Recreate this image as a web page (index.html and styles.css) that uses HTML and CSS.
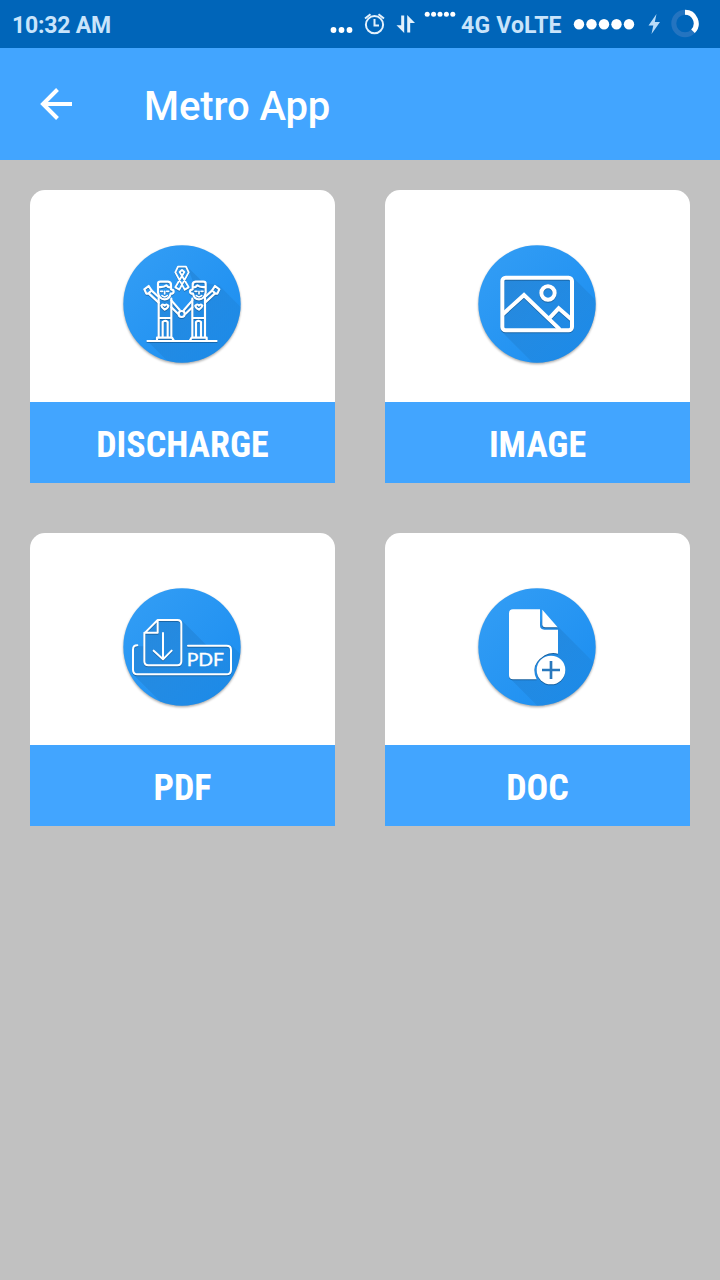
FILE: index.html
```html
<!DOCTYPE html>
<html lang="en">
<head>
  <meta charset="UTF-8" />
  <meta name="viewport" content="width=device-width, initial-scale=1" />
  <title>Metro App</title>
  <link rel="stylesheet" href="styles.css">
</head>
<body>
  <div class="status-bar">
    <span class="time">10:32 AM</span>
    <svg class="more" width="24" height="48" viewBox="0 0 24 48" fill="#fff">
      <circle cx="3.500" cy="30" r="2.900"/><circle cx="11.500" cy="30" r="2.900"/><circle cx="19.500" cy="30" r="2.900"/>
    </svg>
    <svg class="alarm" width="24" height="48" viewBox="0 0 24 48" fill="none" stroke="#e3f1fc" stroke-width="2">
      <circle cx="11.500" cy="24.700" r="8.600"/>
      <path d="M11.500 19v6.500H16M2 18.500l5.500-4.300M21 18.500l-5.500-4.300"/>
    </svg>
    <svg class="data" width="22" height="48" viewBox="0 0 22 48" fill="#e3f1fc">
      <path d="M6.200 15.500h3V33L1.500 25.200h4.700zM12.200 15l7.800 8h-4.800v9.500h-3z"/>
    </svg>
    <svg class="signal-small" width="32" height="48" viewBox="0 0 32 48" fill="#fff">
      <circle cx="3.200" cy="14.300" r="2.500"/><circle cx="9.600" cy="14.300" r="2.500"/><circle cx="16" cy="14.300" r="2.500"/><circle cx="22.400" cy="14.300" r="2.500"/><circle cx="28.800" cy="14.300" r="2.500"/>
    </svg>
    <span class="network">4G VoLTE</span>
    <svg class="signal" width="62" height="48" viewBox="0 0 62 48" fill="#fff">
      <circle cx="6" cy="24.300" r="5.200"/><circle cx="18.500" cy="24.300" r="5.200"/><circle cx="31" cy="24.300" r="5.200"/><circle cx="43.500" cy="24.300" r="5.200"/><circle cx="56" cy="24.300" r="5.200"/>
    </svg>
    <svg class="bolt" width="12" height="48" viewBox="0 0 12 48" fill="#b9dcf9">
      <path d="M8.500 14L.5 25.500h4.800L3.500 34l8.500-12H6.800z"/>
    </svg>
    <svg class="battery" width="28" height="48" viewBox="0 0 28 48" fill="none" stroke-width="5">
      <circle cx="14" cy="23.500" r="11.200" stroke="#2474c0"/>
      <path d="M14 12.300a11.200 11.200 0 0 1 8 19" stroke="#fff"/>
    </svg>
  </div>

  <header class="toolbar">
    <svg class="back" width="32" height="32" viewBox="0 0 32 32" fill="none" stroke="#fff" stroke-width="4">
      <path d="M32 16H3M17.500 1.500L3 16l14.500 14.500"/>
    </svg>
    <h1>Metro App</h1>
  </header>

  <svg class="defs" width="0" height="0">
    <defs>
      <linearGradient id="disc" x1="0" y1="0" x2="1" y2="1">
        <stop offset="0" stop-color="#349ef5"/>
        <stop offset="1" stop-color="#1a8df0"/>
      </linearGradient>
      <linearGradient id="shade" x1="0" y1="0" x2="1" y2="1">
        <stop offset="0" stop-color="#1d6fb9" stop-opacity=".42"/>
        <stop offset="1" stop-color="#1d7fd0" stop-opacity=".2"/>
      </linearGradient>
      <clipPath id="round"><circle cx="195" cy="192" r="176"/></clipPath>
      <g id="person">
        <!-- hair, face, ear -->
        <path d="M123 158V131q0-6 7-6h23q10 1 9 12v11q8 1 8 7t-9 6q-4 17-18 17-17 0-20-20zM123 141q18 2 25-5 4 6 14 7"/>
        <path d="M131 154h6M149 154h6M143 154v8M135 167q8 7 16 0" stroke-width="5"/>
        <!-- raised arm -->
        <path d="M125 188l-30-28-7 1-6-13 13-10 9 14 21 19M95 160l9-9"/>
        <!-- shirt and legs -->
        <path d="M125 174V292M163 176V292M125 234h38M137 292V246q7-7 15 0v46M120 301v-8h45l5 8"/>
        <path d="M133 197q4-7 10 0 5-7 11 0 0 6-11 12-9-6-10-12z"/>
        <path d="M163 181l25 29M163 202l20 19"/>
      </g>
    </defs>
  </svg>

  <main class="grid">
    <a class="card">
      <div class="picture">
        <svg class="icon" viewBox="0 0 390 390">
          <circle class="disc" cx="195" cy="192" r="176"/>
          <path clip-path="url(#round)" fill="url(#shade)" d="M211 80L260 128L306 136L390 220V390H178L92 304L122 290V184L160 180L194 220L228 180V125z"/>
          <g class="line" stroke-width="6.500">
            <use href="#person"/>
            <use href="#person" transform="matrix(-1 0 0 1 389 0)"/>
            <circle cx="194" cy="222" r="9"/>
            <path d="M91 303h208" stroke-width="5.500"/>
            <!-- ribbon -->
            <path d="M183 80h24l8 17-28 52-12-7 27-46-7-6-7 6 27 46-12 7-28-52z" stroke-width="5.500"/>
          </g>
        </svg>
      </div>
      <div class="label"><span>DISCHARGE</span></div>
    </a>

    <a class="card">
      <div class="picture">
        <svg class="icon" viewBox="0 0 390 390">
          <circle class="disc" cx="195" cy="192" r="176"/>
          <path clip-path="url(#round)" fill="url(#shade)" d="M302 111L390 199V390H204L88 274V111z"/>
          <g class="line" stroke-width="12">
            <rect x="91" y="113" width="209" height="158" rx="10"/>
            <circle cx="228" cy="159" r="20"/>
            <path d="M94 221l62-56 105 101M231 236l29-31 37 32" stroke-linejoin="miter"/>
          </g>
        </svg>
      </div>
      <div class="label"><span>IMAGE</span></div>
    </a>

    <a class="card">
      <div class="picture">
        <svg class="icon" viewBox="0 0 390 390">
          <circle class="disc" cx="195" cy="192" r="176"/>
          <path clip-path="url(#round)" fill="url(#shade)" d="M194 112l75 75h75L390 233V390H164L48 274V190h34V150l40-38z"/>
          <g class="line" stroke-width="6">
            <path d="M122 111h59q12 0 12 12v112q0 12-12 12H94q-12 0-12-12v-84zM122 111v38H82"/>
            <path d="M138 150v77M110 203l28 26 26-26"/>
            <path d="M61 187q-13 0-13 13v60q0 14 14 14h266q14 0 14-14v-59q0-13-13-13H213"/>
          </g>
          <text class="pdf" x="209" y="248" textLength="112" lengthAdjust="spacingAndGlyphs">PDF</text>
        </svg>
      </div>
      <div class="label"><span>PDF</span></div>
    </a>

    <a class="card">
      <div class="picture">
        <svg class="icon" viewBox="0 0 390 390">
          <circle class="disc" cx="195" cy="192" r="176"/>
          <path clip-path="url(#round)" fill="url(#shade)" d="M257 130L390 263V390H218L112 284l100-180z"/>
          <g class="solid">
            <path d="M123 79h81v48q0 13 13 13h41v72q-20-6-40 5-31 20-31 44 0 15 7 28h-71q-12 0-12-12V91q0-12 12-12z"/>
            <path d="M211 80l46 53h-37q-9 0-9-9z"/>
            <circle cx="237" cy="261" r="43"/>
          </g>
          <path d="M237 234v54M210 261h54" stroke="#2878bd" stroke-width="8"/>
        </svg>
      </div>
      <div class="label"><span>DOC</span></div>
    </a>
  </main>
</body>
</html>
```

FILE: styles.css
```css
* { margin: 0; padding: 0; box-sizing: border-box; }
body {
  font-family: Roboto, sans-serif;
  background: #c1c1c1;
  min-height: 100vh;
}
/* Status bar */
.status-bar {
  display: flex;
  align-items: center;
  height: 48px;
  padding-left: 12px;
  background: #0065b9;
  color: #c9e4fb;
  font-size: 23px;
  font-weight: 700;
  white-space: nowrap;
}
.status-bar svg { flex: none; }
.time {
  width: 318px;
  padding-top: 2px;
  letter-spacing: -0.2px;
}
.alarm { margin-left: 9px; }
.data { margin-left: 8px; }
.signal-small { margin-left: 7px; }
.network {
  width: 112px;
  margin-left: 5px;
  padding-top: 2px;
  letter-spacing: 0.2px;
}
.bolt { margin-left: 13px; }
.battery { margin-left: 11px; }
/* Toolbar */
.toolbar {
  display: flex;
  align-items: center;
  height: 112px;
  padding-left: 40px;
  background: #42a5ff;
}
h1 {
  margin-left: 72px;
  padding-top: 4px;
  font-size: 40px;
  font-weight: 500;
  letter-spacing: -0.1px;
  color: #fff;
}
.defs { display: block; }
/* Cards */
.grid {
  display: grid;
  grid-template-columns: 1fr 1fr;
  gap: 50px;
  padding: 30px;
}
.card {
  display: block;
  background: #fff;
  border-radius: 15px 15px 0 0;
}
.picture {
  height: 212px;
  padding: 50px 0 0 87px;
}
.icon {
  display: block;
  width: 130px;
  height: 130px;
}
.disc {
  fill: url(#disc);
  filter: drop-shadow(0 4px 3px rgba(0,0,0,0.35));
}
.line {
  fill: none;
  stroke: #fff;
  stroke-linecap: round;
  stroke-linejoin: round;
  filter: drop-shadow(0 3px 2px rgba(0,0,0,0.25));
}
.solid {
  fill: #fff;
  filter: drop-shadow(0 3px 2px rgba(0,0,0,0.3));
}
.pdf {
  fill: #fff;
  stroke: #fff;
  stroke-width: 1;
  font-family: Lato, sans-serif;
  font-size: 49px;
}
.label {
  display: flex;
  align-items: center;
  justify-content: center;
  height: 81px;
  padding-top: 5px;
  background: #42a5ff;
  color: #fff;
  font-size: 36px;
  font-weight: 700;
}
.label span {
  font-family: "Roboto Condensed", Roboto, sans-serif;
  font-stretch: 75%;
}
```
